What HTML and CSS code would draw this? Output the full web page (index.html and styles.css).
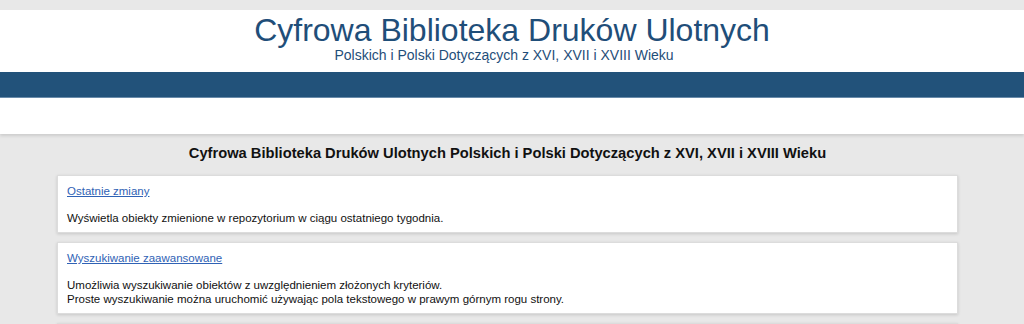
FILE: index.html
```html
<!DOCTYPE html>
<html lang="pl">
<head>
    <meta charset="UTF-8">
    <title>Cyfrowa Biblioteka Druków Ulotnych</title>
    <link rel="stylesheet" href="styles.css">
</head>
<body>
    <div class="header">
        <h1>Cyfrowa Biblioteka Druków Ulotnych</h1>
        <div class="subtitle">Polskich i Polski Dotyczących z XVI, XVII i XVIII Wieku</div>
    </div>
    <div class="menu-bar"></div>
    <div class="toolbar"></div>

    <div class="content">
        <h2>Cyfrowa Biblioteka Druków Ulotnych Polskich i Polski Dotyczących z XVI, XVII i XVIII Wieku</h2>
        <div class="box">
            <a href="#">Ostatnie zmiany</a>
            <p>Wyświetla obiekty zmienione w repozytorium w ciągu ostatniego tygodnia.</p>
        </div>
        <div class="box">
            <a href="#">Wyszukiwanie zaawansowane</a>
            <p>Umożliwia wyszukiwanie obiektów z uwzględnieniem złożonych kryteriów.<br>
            Proste wyszukiwanie można uruchomić używając pola tekstowego w prawym górnym rogu strony.</p>
        </div>
        <div class="box box-empty"></div>
    </div>
</body>
</html>
```

FILE: styles.css
```css
body {
    font-family: "Liberation Sans", Arial, sans-serif;
    background: #e8e8e8;
    margin: 0;
    padding: 10px 0 0 0;
}
.header {
    background: white;
    text-align: center;
    height: 62px;
    color: #1f4e79;
}
.header h1 {
    margin: 0;
    padding-top: 2px;
    font-size: 32px;
    font-weight: normal;
    line-height: 36px;
}
.subtitle {
    font-size: 14px;
    line-height: 14px;
    padding-right: 16px;
}
.menu-bar {
    background: #22527a;
    height: 25px;
    border-bottom: 1px solid #6a8cab;
}
.toolbar {
    background: white;
    height: 36px;
    box-shadow: 0 2px 3px rgba(0, 0, 0, 0.12);
}
.content {
    width: 901px;
    margin-left: 57px;
}
.content h2 {
    text-align: center;
    font-size: 14.7px;
    line-height: 18px;
    margin: 10px 0 0 0;
    padding: 0 0 13px 0;
    color: #111;
}
.box {
    background: white;
    border: 1px solid #dcdcdc;
    box-shadow: 0 1px 3px rgba(0, 0, 0, 0.15);
    padding: 8px 9px 7px 9px;
    margin-bottom: 9px;
    font-size: 11.5px;
    line-height: 14px;
}
.box-empty {
    height: 40px;
}
.box a {
    color: #2f62b5;
}
.box p {
    margin: 13px 0 0 0;
    color: #111;
}
```
